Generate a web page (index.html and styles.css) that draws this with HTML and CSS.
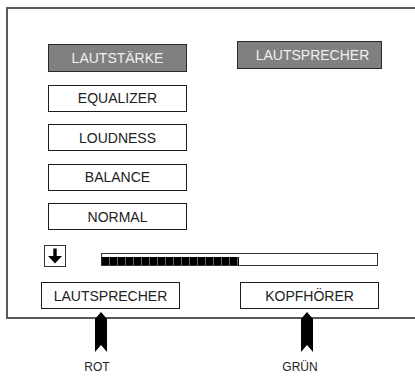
FILE: index.html
```html
<!DOCTYPE html>
<html>
<head>
<meta charset="utf-8">
<link rel="stylesheet" href="styles.css">
</head>
<body>
<div class="frame">
  <div class="top">
    <div class="col">
      <div class="btn btn-dark">LAUTSTÄRKE</div>
      <div class="btn">EQUALIZER</div>
      <div class="btn">LOUDNESS</div>
      <div class="btn">BALANCE</div>
      <div class="btn">NORMAL</div>
    </div>
    <div class="btn btn-dark btn-right">LAUTSPRECHER</div>
  </div>
  <div class="mid">
    <div class="arrowbox">
      <svg width="20" height="20" viewBox="0 0 20 20">
        <rect x="8.3" y="2.5" width="3.4" height="9" fill="#000"/>
        <polygon points="3,10 17,10 10,17.5" fill="#000"/>
      </svg>
    </div>
    <div class="bar"><div class="fill" style="width:137px"></div></div>
  </div>
  <div class="bottom">
    <div class="btn">LAUTSPRECHER</div>
    <div class="btn">KOPFHÖRER</div>
  </div>
</div>
<div class="markers">
  <svg class="marker" width="12" height="40" viewBox="0 0 12 40"><polygon points="6,0 12,7 12,40 6,33 0,40 0,7" fill="#000"/></svg>
  <svg class="marker marker2" width="12" height="40" viewBox="0 0 12 40"><polygon points="6,0 12,7 12,40 6,33 0,40 0,7" fill="#000"/></svg>
</div>
<div class="labels">
  <span class="lab lab1">ROT</span>
  <span class="lab lab2">GRÜN</span>
</div>
</body>
</html>
```
FILE: styles.css
```css
html, body {
  margin: 0;
  padding: 0;
  overflow: hidden;
  background: #fff;
}
body {
  font-family: "Liberation Sans", Arial, sans-serif;
  font-size: 14px;
  color: #222;
  width: 415px;
  height: 379px;
}
.frame {
  margin: 7px 0 0 6px;
  width: 409px;
  height: 308px;
  border: 2px solid #5a5a5a;
  border-right: none;
  box-sizing: content-box;
}
.top {
  display: flex;
  align-items: flex-start;
  padding: 32px 0 0 40px;
  gap: 50px;
}
.col {
  display: flex;
  flex-direction: column;
  gap: 12.5px;
  margin-top: 3px;
}
.btn {
  box-sizing: border-box;
  width: 139px;
  height: 27px;
  border: 1px solid #1a1a1a;
  background: #fff;
  display: flex;
  align-items: center;
  justify-content: center;
  line-height: 1;
}
.btn-dark {
  background: #808080;
  color: #f0f0f0;
  border-color: #2a2a2a;
  height: 28px;
}
.btn-right {
  width: 145px;
  padding-left: 6px;
}
.mid {
  display: flex;
  align-items: flex-start;
  margin-top: 15px;
  padding-left: 36px;
}
.arrowbox {
  box-sizing: border-box;
  width: 22px;
  height: 22px;
  border: 1px solid #333;
  display: flex;
  align-items: center;
  justify-content: center;
}
.bar {
  box-sizing: border-box;
  width: 277px;
  height: 13px;
  margin: 8px 0 0 35px;
  border: 1px solid #333;
  padding-top: 3px;
}
.fill {
  height: 8px;
  background: repeating-linear-gradient(90deg, #000 0, #000 7px, #666 7px, #666 8px);
}
.bottom {
  display: flex;
  gap: 60px;
  margin-top: 15px;
  padding-left: 33px;
}
.markers {
  display: flex;
  margin-top: -7px;
  padding-left: 95px;
}
.marker {
  display: block;
}
.marker2 {
  margin-left: 194px;
}
.labels {
  display: flex;
  margin-top: 8px;
  padding-left: 77px;
  font-size: 12px;
  color: #222;
}
.lab {
  display: block;
  text-align: center;
}
.lab1 {
  width: 40px;
}
.lab2 {
  width: 60px;
  margin-left: 153px;
}
```
